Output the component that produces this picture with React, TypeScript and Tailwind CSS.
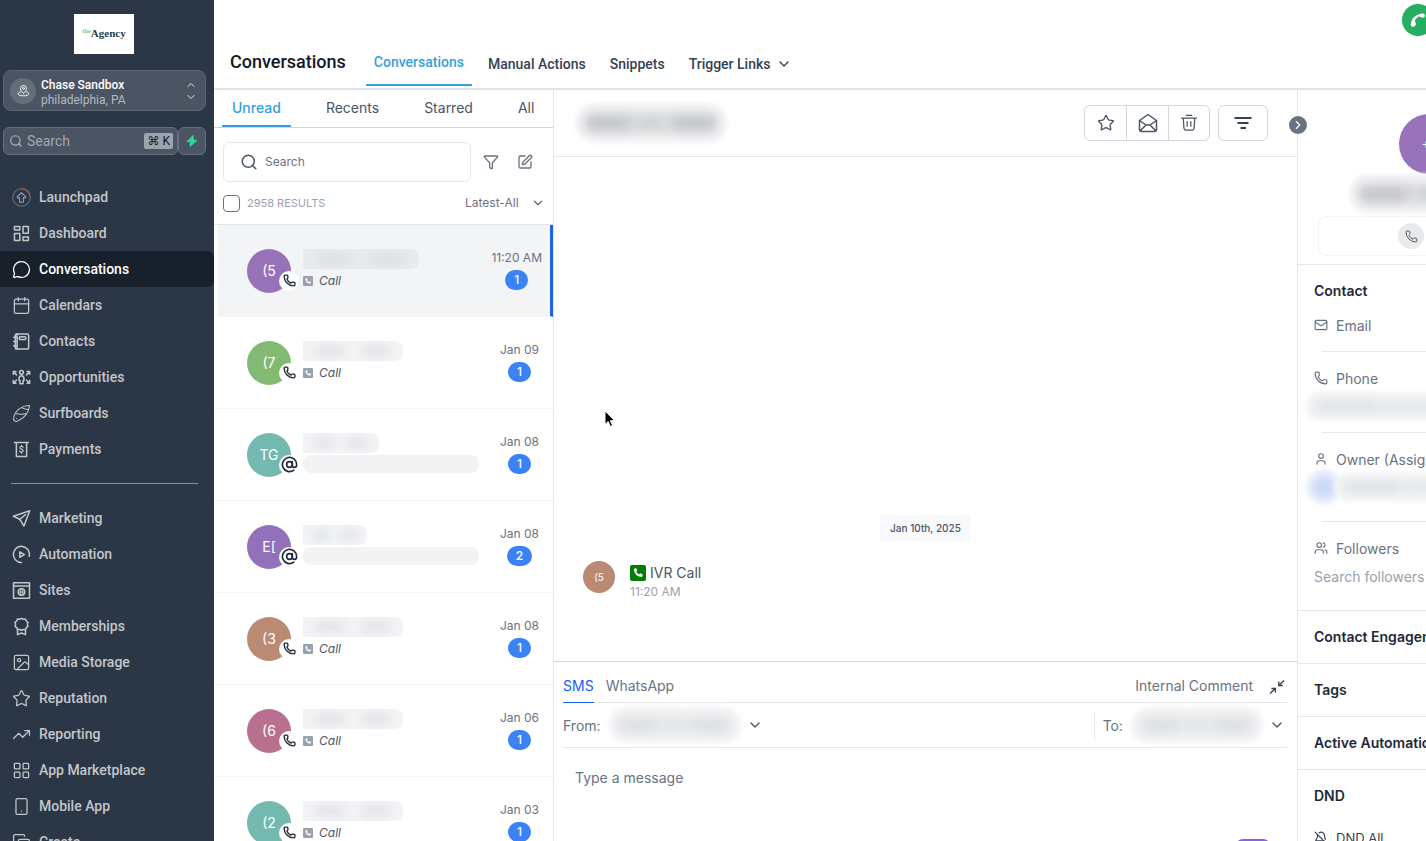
import type { ComponentType, ReactNode } from 'react';
import { clsx } from 'clsx';
import {
  AtSign,
  BellOff,
  Calendar,
  ChevronDown,
  ChevronRight,
  ChevronUp,
  Copy,
  Funnel,
  Image,
  LayoutGrid,
  Mail,
  MailOpen,
  MessageCircle,
  Phone,
  Search,
  Smartphone,
  SquarePen,
  Star,
  TrendingUp,
  User,
  Users,
} from 'lucide-react';

type IconProps = { className?: string };

const Svg = ({ className, children }: { className?: string; children: ReactNode }) => (
  <svg
    viewBox="0 0 20 20"
    fill="none"
    stroke="currentColor"
    strokeWidth="1.4"
    strokeLinecap="round"
    strokeLinejoin="round"
    className={className}
    aria-hidden="true"
  >
    {children}
  </svg>
);

const LaunchpadIcon = ({ className }: IconProps) => (
  <Svg className={className}>
    <circle cx="10" cy="10" r="9.2" strokeWidth="1.1" className="stroke-gray-500" />
    <path d="M10 .8a9.2 9.2 0 0 1 8.600 5.800" strokeWidth="1.1" className="stroke-[#b8683a]" />
    <path d="M10 5l4.600 4.400-.9 1.300-1.700-.7v5H8v-5l-1.700.7-.9-1.300z" strokeWidth="1.1" className="stroke-gray-400" />
  </Svg>
);

const DashboardIcon = ({ className }: IconProps) => (
  <Svg className={className}>
    <rect x="2.6" y="2.6" width="5.6" height="3.8" />
    <rect x="11.6" y="2.6" width="5.6" height="7.2" />
    <rect x="2.6" y="10" width="5.6" height="7.4" />
    <rect x="11.6" y="13.6" width="5.6" height="3.8" />
  </Svg>
);

const ContactsIcon = ({ className }: IconProps) => (
  <Svg className={className}>
    <rect x="3.5" y="2" width="14" height="16" rx="1.5" />
    <rect x="7.6" y="5" width="7" height="3" rx="1.5" />
    <path d="M5.4 2v16M1.8 5.5h3M1.8 10h3M1.8 14.5h3" />
  </Svg>
);

const OpportunitiesIcon = ({ className }: IconProps) => (
  <Svg className={className}>
    <circle cx="10" cy="4.6" r="2" />
    <path d="M10 8.2c-1.8 0-2.6 1.4-2.6 3.2v1.8h1v3.4h3.2v-3.4h1v-1.8c0-1.8-.8-3.2-2.6-3.2z" />
    <path d="M4.2 3.8H1.4v2.8M1.4 3.8l3.4 3.4M4.2 16H1.4v-2.8M1.4 16l3.4-3.4M15.8 3.8h2.8v2.8M18.6 3.8l-3.4 3.4M15.8 16h2.8v-2.8M18.6 16l-3.4-3.4" />
  </Svg>
);

const SurfboardIcon = ({ className }: IconProps) => (
  <Svg className={className}>
    <path d="M18.6 1.6C12 1.4 4.6 5.4 2.2 12.4L1.6 17l2.6 1.4c1.400-.2 2-.8 3.600-1.600 6-2.800 9.800-8.200 10.800-15.200z" strokeWidth="1.1" />
    <path d="M4 10c3.600 1.600 7 .6 10.600.4M10 3.800c2 1.200 4.400 2 7.200 2M4.600 15.200h.2" strokeWidth="1.1" />
  </Svg>
);

const PaymentsIcon = ({ className }: IconProps) => (
  <Svg className={className}>
    <path d="M2.600 2.600h14.800M4.600 2.600v14.800h10.800V2.600" />
    <path d="M11.800 7.600c-.4-.7-1-.9-1.800-.9-1 0-1.700.5-1.700 1.400 0 2 3.500 1 3.500 3.100 0 .9-.8 1.500-1.800 1.500s-1.600-.3-2-1M10 5.600v1M10 12.900v1" strokeWidth="1.2" />
  </Svg>
);

const MarketingIcon = ({ className }: IconProps) => (
  <Svg className={className}>
    <path d="M18.600 1.800L1.400 7.600l6.800 3.200 4.400 7.200z" />
    <path d="M8.200 10.800l6-4.800" />
  </Svg>
);

const AutomationIcon = ({ className }: IconProps) => (
  <Svg className={className}>
    <path d="M10 18.400a8.500 8.500 0 1 1 8.200-6.600" />
    <path d="M8.200 7.200v5.800l4.800-2.900z" />
  </Svg>
);

const SitesIcon = ({ className }: IconProps) => (
  <Svg className={className}>
    <rect x="1.600" y="1.800" width="16.800" height="16.400" />
    <path d="M1.600 5.200h16.800" />
    <circle cx="10" cy="11.600" r="3.400" />
    <path d="M6.600 11.600h6.800M10 8.200c-1.600 2-1.600 4.800 0 6.800 1.600-2 1.600-4.800 0-6.800z" strokeWidth="1" />
  </Svg>
);

const MembershipsIcon = ({ className }: IconProps) => (
  <Svg className={className}>
    <path d="M10 1.400l2 .9 2.200-.1.900 2 1.700 1.400-.6 2.100.6 2.200-1.700 1.300-.900 2-2.200-.1-2 .9-2-.9-2.200.1-.900-2-1.700-1.300.6-2.200-.6-2.100 1.700-1.400.900-2 2.200.1z" />
    <path d="M5.800 13.200v5.400l4.200-1.800 4.200 1.800v-5.400" />
  </Svg>
);

const TrashIcon = ({ className }: IconProps) => (
  <Svg className={className}>
    <path d="M1.800 4.600h16.400M7 1.600h6M3.600 4.600l.8 11.200c.1 1.300 1 2.200 2.200 2.200h6.800c1.200 0 2.100-.9 2.200-2.200l.8-11.200M8 8.600v5M12 8.600v5" />
  </Svg>
);

const CallSquare = ({ className }: IconProps) => (
  <svg viewBox="0 0 16 16" className={className} aria-hidden="true">
    <rect width="16" height="16" rx="2" fill="currentColor" />
    <path
      d="M4.200 3.800l1.700-.6c.3-.1.500 0 .6.300l.7 1.700c.1.200 0 .4-.1.500l-.8.800c.5 1.300 1.500 2.300 2.800 2.900l.8-.9c.1-.2.400-.2.600-.1l1.800.8c.3.100.4.400.3.600l-.5 1.800c-.1.200-.3.400-.5.400-4.200 0-7.600-3.400-7.700-7.700 0-.2.100-.4.300-.5z"
      fill="white"
    />
  </svg>
);

type NavItem = { label: string; icon: ComponentType<IconProps>; active?: boolean };

const mainNav: NavItem[] = [
  { label: 'Launchpad', icon: LaunchpadIcon },
  { label: 'Dashboard', icon: DashboardIcon },
  { label: 'Conversations', icon: MessageCircle, active: true },
  { label: 'Calendars', icon: Calendar },
  { label: 'Contacts', icon: ContactsIcon },
  { label: 'Opportunities', icon: OpportunitiesIcon },
  { label: 'Surfboards', icon: SurfboardIcon },
  { label: 'Payments', icon: PaymentsIcon },
];

const moreNav: NavItem[] = [
  { label: 'Marketing', icon: MarketingIcon },
  { label: 'Automation', icon: AutomationIcon },
  { label: 'Sites', icon: SitesIcon },
  { label: 'Memberships', icon: MembershipsIcon },
  { label: 'Media Storage', icon: Image },
  { label: 'Reputation', icon: Star },
  { label: 'Reporting', icon: TrendingUp },
  { label: 'App Marketplace', icon: LayoutGrid },
  { label: 'Mobile App', icon: Smartphone },
  { label: 'Create', icon: Copy },
];

type Thread = {
  initials: string;
  color: string;
  date: string;
  count: number;
  kind: 'call' | 'email';
  nameWidth: string;
  active?: boolean;
};

const threads: Thread[] = [
  { initials: '(5', color: 'bg-[#9872b8]', date: '11:20 AM', count: 1, kind: 'call', nameWidth: 'w-[116px]', active: true },
  { initials: '(7', color: 'bg-[#82b973]', date: 'Jan 09', count: 1, kind: 'call', nameWidth: 'w-[100px]' },
  { initials: 'TG', color: 'bg-[#74b9b0]', date: 'Jan 08', count: 1, kind: 'email', nameWidth: 'w-[76px]' },
  { initials: 'E[', color: 'bg-[#9270ba]', date: 'Jan 08', count: 2, kind: 'email', nameWidth: 'w-16' },
  { initials: '(3', color: 'bg-[#ba8a72]', date: 'Jan 08', count: 1, kind: 'call', nameWidth: 'w-[100px]' },
  { initials: '(6', color: 'bg-[#b9708f]', date: 'Jan 06', count: 1, kind: 'call', nameWidth: 'w-[100px]' },
  { initials: '(2', color: 'bg-[#74b9b0]', date: 'Jan 03', count: 1, kind: 'call', nameWidth: 'w-[100px]' },
];

// Private values are shown as a soft smudge
const Smudge = ({ className, strong }: { className?: string; strong?: boolean }) => (
  <span className={clsx('flex shrink-0 rounded-full bg-[#f2f3f5] p-2 blur-[2px]', className)}>
    <span
      className={clsx(
        'flex flex-1 items-center justify-around rounded-full blur-[3px]',
        strong ? 'bg-[#dedfe1]' : 'bg-[#e9ebed]',
      )}
    >
      <span className={clsx('h-3/5 w-1/3 rounded-full blur-[3px]', strong ? 'bg-[#c4c6ca]' : 'bg-[#dcdfe2]')} />
      <span className={clsx('h-2/5 w-1/5 rounded-full blur-[3px]', strong ? 'bg-[#cfd0d3]' : 'bg-[#e0e3e5]')} />
      <span className={clsx('h-3/5 w-1/3 rounded-full blur-[3px]', strong ? 'bg-[#c4c6ca]' : 'bg-[#dcdfe2]')} />
    </span>
  </span>
);

const NavLink = ({ label, icon: Icon, active }: NavItem) => (
  <a
    href="#"
    className={clsx(
      'flex h-9 shrink-0 items-center gap-2 rounded-r-md pl-3 text-[14px] font-medium',
      active ? 'bg-[#18202c] text-white' : 'text-[#c3c6ca] hover:text-white',
    )}
  >
    <Icon className="size-[19px] stroke-[1.6]" />
    {label}
  </a>
);

const Sidebar = () => (
  <aside className="flex w-[214px] shrink-0 flex-col overflow-hidden bg-[#2b3646] pt-3.5 font-[Roboto,sans-serif]">
    <div className="mr-1.5 flex h-10 w-[60px] shrink-0 items-start justify-center self-center bg-white pt-3 font-['Liberation_Serif',serif] text-[11px] leading-[14px] font-bold text-[#23404f]">
      <span className="text-[7px] leading-[10px] font-normal text-teal-500">the</span>
      Agency
    </div>

    <button className="ml-[3px] mr-2 mt-4 flex h-[41px] shrink-0 items-center rounded-lg border border-[#5a6472] bg-[#4a5462] pl-1.5 pr-2 text-left">
      <span className="flex size-[26px] items-center justify-center rounded-full bg-[#646d7a] text-white">
        <Svg className="size-[13px]">
          <path d="M10 14.500c-2.800-3-4.600-5-4.600-7.600a4.600 4.600 0 0 1 9.200 0c0 2.600-1.800 4.600-4.600 7.600z" />
          <circle cx="10" cy="6.800" r="1.500" />
          <path d="M5.400 12.200c-2.200.5-3.800 1.500-3.800 2.700 0 1.900 3.800 3.300 8.400 3.300s8.400-1.400 8.400-3.300c0-1.200-1.600-2.200-3.800-2.700" />
        </Svg>
      </span>
      <span className="ml-1 flex-1 pl-px pt-1 text-[12px] leading-[15px]">
        <span className="block font-medium text-white">Chase Sandbox</span>
        <span className="block text-[#b4b9c0]">philadelphia, PA</span>
      </span>
      <span className="flex flex-col text-gray-200">
        <ChevronUp className="size-3" />
        <ChevronDown className="size-3" />
      </span>
    </button>

    <div className="ml-[3px] mr-2 mt-4 flex h-7 shrink-0">
      <label className="flex min-w-0 flex-1 items-center rounded-md border border-[#667080] bg-[#4a5462] pl-1 pr-1">
        <Search className="ml-px size-3.5 shrink-0 text-[#aeb3ba]" />
        <input
          type="search"
          aria-label="Search"
          placeholder="Search"
          className="ml-1 min-w-0 flex-1 bg-transparent text-[14px] outline-none placeholder:text-[#a3a9b2]"
        />
        <kbd className="rounded-xs bg-[#9ca3af] px-[3px] font-[Roboto,'DejaVu_Sans',sans-serif] text-[12px] leading-4 text-gray-900">
          ⌘ K
        </kbd>
      </label>
      <button aria-label="Quick actions" className="flex w-7 items-center justify-center rounded-md border border-[#667080] bg-[#4a5462]">
        <svg viewBox="0 0 12 12" className="size-3 fill-[#34d399]" aria-hidden="true">
          <path d="M6.800.200L.800 6.200c-.3.300-.1.900.4.900h2.600L3.600 11.500c0 .5.500.6.800.3l6.800-6.200c.3-.3.100-.9-.4-.9H8L7.600.500c0-.4-.5-.6-.8-.3z" />
        </svg>
      </button>
    </div>

    <nav className="mt-6 flex flex-col">
      {mainNav.map((item) => (
        <NavLink key={item.label} {...item} />
      ))}
      <hr className="my-4 ml-[11px] mr-4 border-[#8a929d]" />
      {moreNav.map((item) => (
        <NavLink key={item.label} {...item} />
      ))}
    </nav>
  </aside>
);

const Header = () => (
  <header className="relative h-[90px] shrink-0 border-b-2 border-[#e0e4e8] pl-4 font-[Roboto,sans-serif]">
    <div className="flex h-[86px] items-end">
      <h1 className="mr-5 pb-3 text-[18px] leading-6 font-medium text-gray-900">Conversations</h1>
      <nav className="flex items-end text-[14px] leading-5 font-medium text-gray-700">
        <a href="#" className="border-b-2 border-[#37a0dc] px-2 pb-3 text-[#37a0dc]">
          Conversations
        </a>
        <a href="#" className="ml-4 pb-3">
          Manual Actions
        </a>
        <a href="#" className="ml-6 pb-3">
          Snippets
        </a>
        <button className="ml-6 flex items-center gap-1.5 pb-3">
          Trigger Links
          <ChevronDown className="size-4" />
        </button>
      </nav>
    </div>
    <button
      aria-label="Open dialer"
      className="absolute -right-2 top-1 flex size-8 items-center justify-center rounded-full bg-[#27ae60] text-white"
    >
      <svg viewBox="0 0 16 16" className="size-4 fill-current" aria-hidden="true">
        <path d="M2.600 14.800c-1.300 0-2-.9-1.900-2.200C1.200 6.500 5.800 2.100 12 1.500c1.700-.1 2.700.4 2.800 1.800.1 1.500-.5 2.400-1.900 2.300l-1.900-.3c-.6-.1-1-.5-1.300-1C7.200 5.200 5.400 7 4.700 9.600c.6.200 1 .6 1 1.300v1.900c0 1.200-1.300 2-3.100 2z" />
      </svg>
    </button>
  </header>
);

const ThreadRow = ({ initials, color, date, count, kind, nameWidth, active }: Thread) => (
  <li
    className={clsx(
      'flex h-[92px] shrink-0 items-center border-b border-gray-100',
      active ? 'ml-1 border-r-[3px] border-r-[#1f63e0] bg-[#f2f4f6] pl-[29px] pr-2' : 'pl-[33px] pr-3.5',
    )}
  >
    <div className={clsx('relative flex size-11 shrink-0 items-center justify-center rounded-full text-[14px] text-white', color)}>
      {initials}
      <span className="absolute -right-2 bottom-0.5 flex size-5 items-center justify-center rounded-full bg-white text-gray-800">
        {kind === 'call' ? <Phone className="size-[13px] stroke-[2.5]" /> : <AtSign className="size-[17px] stroke-[2.3]" />}
      </span>
    </div>
    <div className="ml-3 min-w-0 flex-1 pb-1">
      <span
        className={clsx('flex h-5 items-center justify-around rounded-r-lg px-1', nameWidth, active ? 'bg-[#e8ebed]' : 'bg-[#f2f3f5]')}
      >
        <span className="h-2.5 w-1/3 rounded-full bg-gray-300/50 blur-[4px]" />
        <span className="h-2.5 w-1/3 rounded-full bg-gray-300/50 blur-[4px]" />
      </span>
      {kind === 'call' ? (
        <span className="mt-1 flex items-center gap-1.5 text-[12px] leading-4 text-gray-600 italic">
          <CallSquare className="size-2.5 text-gray-400" />
          Call
        </span>
      ) : (
        <span className="mt-0.5 block h-[18px] w-[176px] rounded-lg bg-[#f2f3f5]" />
      )}
    </div>
    <div className="flex flex-col items-center gap-0.5 pb-1 text-[12px] leading-5 text-gray-500">
      <span className="whitespace-nowrap">{date}</span>
      <span className="rounded-full bg-[#3b82f6] px-[9px] text-[12px] leading-5 font-medium text-white">{count}</span>
    </div>
  </li>
);

const ThreadList = () => (
  <section className="flex w-[340px] shrink-0 flex-col overflow-hidden border-r border-gray-200">
    <div className="flex h-[38px] shrink-0 items-end gap-[25px] border-b border-gray-300 pl-2 text-[14px] leading-5 text-gray-600">
      <button className="border-b-2 border-[#37a0dc] px-2.5 pb-[7px] font-medium text-[#37a0dc]">Unread</button>
      <button className="border-b-2 border-transparent px-2.5 pb-[7px]">Recents</button>
      <button className="border-b-2 border-transparent px-2.5 pb-[7px]">Starred</button>
      <button className="border-b-2 border-transparent px-2.5 pb-[7px]">All</button>
    </div>

    <div className="flex items-center pl-[9px] pr-5 pt-3.5">
      <label className="flex h-10 min-w-0 flex-1 items-center gap-[7px] rounded-md border border-gray-200 px-4 text-gray-600">
        <Search className="size-[18px] shrink-0" />
        <input
          type="search"
          aria-label="Search conversations"
          placeholder="Search"
          className="min-w-0 flex-1 text-[12px] outline-none placeholder:text-gray-500"
        />
      </label>
      <button aria-label="Filter" className="ml-3 text-gray-500">
        <Funnel className="size-4" />
      </button>
      <button aria-label="New message" className="ml-[18px] text-gray-500">
        <SquarePen className="size-4" />
      </button>
    </div>

    <div className="flex h-[43px] shrink-0 items-center border-b border-gray-200 pl-[9px] pr-2 text-[12px] text-gray-500">
      <input
        type="checkbox"
        id="select-all"
        className="size-[17px] appearance-none rounded-sm border border-gray-500 bg-white checked:bg-blue-500"
      />
      <label htmlFor="select-all" className="ml-[7px] text-[11px] text-gray-400">
        2958 RESULTS
      </label>
      <label className="ml-auto flex items-center gap-2.5">
        <select aria-label="Sort" className="appearance-none bg-transparent outline-none">
          <option>Latest-All</option>
          <option>Oldest-All</option>
        </select>
        <ChevronDown className="size-3.5 stroke-[2.5]" />
      </label>
    </div>

    <ul className="flex flex-col">
      {threads.map((thread, i) => (
        <ThreadRow key={i} {...thread} />
      ))}
    </ul>
  </section>
);

const Composer = () => (
  <div className="flex h-[180px] shrink-0 flex-col border-t border-gray-300 pl-[9px] pr-2.5 text-[14px] text-gray-500">
    <div className="flex h-[41px] shrink-0 items-end border-b border-gray-200 leading-5">
      <button className="-mb-px border-b border-blue-600 pb-1.5 text-blue-600">SMS</button>
      <button className="ml-3 pb-1.5">WhatsApp</button>
      <button className="ml-auto pb-1.5">Internal Comment</button>
      <button aria-label="Collapse composer" className="ml-4 pb-[7px] pr-0.5 text-gray-700">
        <svg viewBox="0 0 16 16" className="size-4" fill="none" stroke="currentColor" strokeWidth="1.3" aria-hidden="true">
          <path d="M15 1.500L9.800 6.500M9.800 2.500v4h4M1 14.500l5.400-5M2.400 9.500h4v4" />
        </svg>
      </button>
    </div>
    <div className="flex h-[45px] shrink-0 items-center border-b border-gray-200">
      <span>From:</span>
      <button aria-label="From number" className="flex items-center gap-1.5 pl-2">
        <Smudge className="h-9 w-[132px]" />
        <ChevronDown className="size-4 text-gray-600" />
      </button>
      <div className="ml-auto flex h-7 items-center border-l border-gray-200 pl-2">
        <span>To:</span>
        <button aria-label="To number" className="flex items-center gap-1.5 pl-2">
          <Smudge className="h-9 w-[132px]" />
          <ChevronDown className="mr-0.5 size-4 text-gray-600" />
        </button>
      </div>
    </div>
    <textarea
      aria-label="Message"
      placeholder="Type a message"
      className="min-h-0 flex-1 resize-none px-3 pt-5 leading-5 outline-none placeholder:text-gray-500"
    />
    <button
      aria-label="Content AI"
      className="-mb-4 mr-4 h-[18px] w-9 shrink-0 self-end rounded-lg border-2 border-[#8b63e0] bg-white"
    />
  </div>
);

const Conversation = () => (
  <section className="relative flex min-w-0 flex-1 flex-col">
    <div className="flex h-[67px] shrink-0 items-center border-b border-gray-200 pl-[21px] pr-[29px]">
      <Smudge className="h-10 w-[152px]" strong />
      <div className="ml-auto flex h-9 divide-x divide-gray-300 rounded-md border border-gray-300 text-gray-600">
        <button aria-label="Star" className="flex w-[42px] items-center justify-center">
          <Star className="size-[18px] stroke-[1.8]" />
        </button>
        <button aria-label="Mark as read" className="flex w-[42px] items-center justify-center">
          <svg viewBox="0 0 20 20" className="size-5" fill="none" stroke="currentColor" strokeWidth="1.5" strokeLinejoin="round" aria-hidden="true">
            <path d="M1.500 7.500L10 1.500l8.500 6v9a2 2 0 0 1-2 2h-13a2 2 0 0 1-2-2zM1.500 7.500L8 12h4l6.500-4.500M2 18l6-6M18 18l-6-6" />
          </svg>
        </button>
        <button aria-label="Delete" className="flex w-10 items-center justify-center">
          <TrashIcon className="size-[18px]" />
        </button>
      </div>
      <button aria-label="Filter messages" className="ml-2 flex h-9 w-[50px] items-center justify-center rounded-md border border-gray-300 text-gray-700">
        <svg viewBox="0 0 18 14" className="h-3.5 w-[18px]" fill="none" stroke="currentColor" strokeWidth="1.8" aria-hidden="true">
          <path d="M.500 2h17M3.500 7h11M6.500 12h5.500" />
        </svg>
      </button>
    </div>
    <button
      aria-label="Toggle contact details"
      className="absolute -right-2.5 top-[26px] z-10 flex size-[18px] items-center justify-center rounded-full bg-gray-500 text-white"
    >
      <ChevronRight className="size-3.5" />
    </button>

    <div className="flex min-h-0 flex-1 flex-col justify-end pb-[60px]">
      <time className="self-center rounded-xs bg-[#f7f9fb] px-2.5 text-[10px] leading-[26px] font-medium text-gray-600">
        Jan 10th, 2025
      </time>
      <div className="mt-5 flex items-start pl-[29px]">
        <span className="flex size-8 items-center justify-center rounded-full bg-[#ba8a72] text-[10px] text-white">(5</span>
        <div className="ml-[15px] pt-0.5">
          <p className="flex items-center gap-1 text-[14px] leading-5 text-gray-600">
            <CallSquare className="size-4 text-[#008000]" />
            IVR Call
          </p>
          <p className="text-[12px] leading-[18px] text-gray-400">11:20 AM</p>
        </div>
      </div>
    </div>

    {/* mouse pointer */}
    <svg viewBox="0 0 12 18" className="absolute left-[50px] top-80 h-[18px] w-3" aria-hidden="true">
      <path d="M1 1v13.500l3.200-3 2.200 5 2.200-1-2.200-4.800h4.400z" fill="black" stroke="white" />
    </svg>

    <Composer />
  </section>
);

const Field = ({ icon, label, children }: { icon: ReactNode; label: string; children?: ReactNode }) => (
  <div className="px-4">
    <p className="flex h-5 items-center gap-2 text-[14px] whitespace-nowrap text-gray-500">
      {icon}
      {label}
    </p>
    {children}
  </div>
);

const ContactPanel = () => (
  <aside className="w-[129px] shrink-0 overflow-hidden border-l border-gray-200 text-[14px] text-gray-800">
    <div className="w-[262px]">
      <div className="flex h-[175px] flex-col items-center border-b border-gray-200 pt-6">
        <span className="flex size-[60px] shrink-0 items-center justify-center rounded-full bg-[#9872b8] text-[14px] text-white">+1</span>
        <Smudge className="h-10 w-40" strong />
        <div className="mt-0.5 flex h-10 w-[222px] shrink-0 items-center justify-center rounded-lg border border-gray-100">
          <button aria-label="Call contact" className="mr-9 flex size-[26px] items-center justify-center rounded-full bg-[#e8eaec] text-gray-600">
            <Phone className="size-[13px] stroke-[1.8]" />
          </button>
        </div>
      </div>

      <h2 className="px-4 pt-4 leading-5 font-semibold">Contact</h2>
      <div className="mt-3.5">
        <Field icon={<Mail className="size-3.5" />} label="Email" />
      </div>
      <hr className="ml-6 mt-4 border-gray-200" />
      <div className="pt-4">
        <Field icon={<Phone className="size-3.5" />} label="Phone">
          <Smudge className="-ml-2 mt-1 h-7 w-48" />
        </Field>
      </div>
      <hr className="ml-6 mt-3 border-gray-200" />
      <div className="pt-4">
        <Field icon={<User className="size-3.5" />} label="Owner (Assigned to)">
          <div className="-ml-2 flex items-center">
            <span className="flex size-9 shrink-0 rounded-full bg-[#eef2fd] p-1.5 blur-[2px]">
              <span className="flex-1 rounded-full bg-[#ccdaf6] blur-[3px]" />
            </span>
            <Smudge className="-ml-2 h-7 w-44" />
          </div>
        </Field>
      </div>
      <hr className="ml-6 mt-4 border-gray-200" />
      <div className="h-[89px] border-b border-gray-200 pt-4">
        <Field icon={<Users className="size-3.5" />} label="Followers">
          <input
            aria-label="Search followers"
            placeholder="Search followers"
            className="mt-2 h-5 w-full outline-none placeholder:text-gray-400"
          />
        </Field>
      </div>
      {['Contact Engagement Score', 'Tags', 'Active Automations'].map((title) => (
        <h2 key={title} className="border-b border-gray-200 px-4 leading-[52px] font-semibold">
          {title}
        </h2>
      ))}
      <h2 className="px-4 leading-[52px] font-semibold">DND</h2>
      <label className="flex items-center gap-2 px-4 pt-1.5 text-[13px] leading-5 text-gray-700">
        <BellOff className="size-3.5" />
        DND All
      </label>
    </div>
  </aside>
);

export default function App() {
  return (
    <div className="flex h-screen overflow-hidden bg-white font-[Inter,sans-serif]">
      <Sidebar />
      <main className="flex min-w-0 flex-1 flex-col overflow-hidden">
        <Header />
        <div className="flex min-h-0 flex-1">
          <ThreadList />
          <Conversation />
          <ContactPanel />
        </div>
      </main>
    </div>
  );
}
